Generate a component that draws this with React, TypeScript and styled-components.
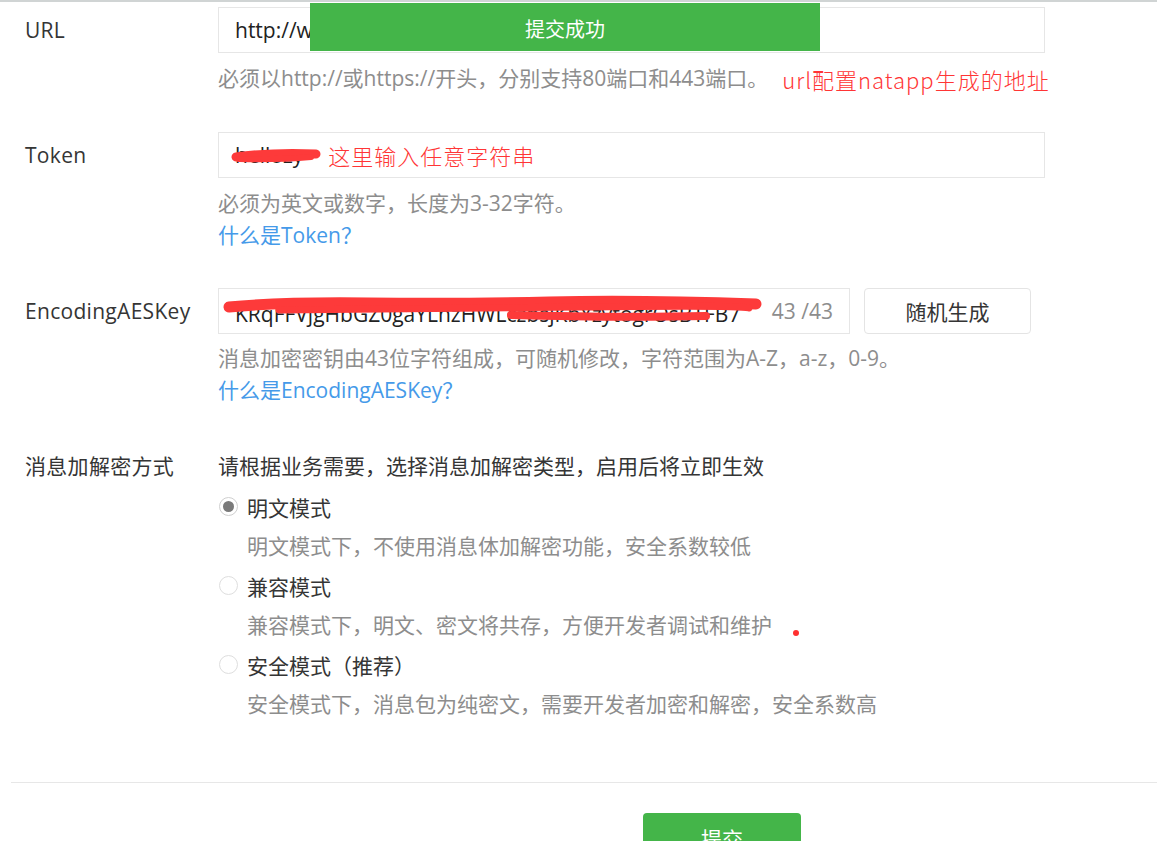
import React from "react";
import styled, { createGlobalStyle } from "styled-components";

const GlobalStyle = createGlobalStyle`
  html, body {
    margin: 0;
    padding: 0;
    background: #ffffff;
    overflow: hidden;
  }
  body {
    font-family: "Open Sans", "Noto Sans CJK SC", sans-serif;
    font-size: 21px;
    color: #353535;
  }
  * { box-sizing: border-box; }
`;

const Page = styled.div`
  position: relative;
  min-height: 841px;
  border-top: 2px solid #d0d4d4;
`;

const Toast = styled.div`
  position: absolute;
  top: 1px;
  left: 310px;
  width: 510px;
  height: 48px;
  background: #44b549;
  color: #ffffff;
  font-size: 20px;
  line-height: 52px;
  text-align: center;
  font-family: "Noto Sans CJK SC", sans-serif;
  z-index: 5;
`;

const Form = styled.div`
  display: flex;
  flex-direction: column;
  gap: 37px;
  padding: 5px 0 0 25px;
`;

const FieldRow = styled.div<{ $mt?: number }>`
  display: grid;
  grid-template-columns: 193px 827px;
  margin-top: ${(p) => p.$mt ?? 0}px;
`;

const Label = styled.div<{ $lh?: number }>`
  font-size: 21px;
  line-height: ${(p) => p.$lh ?? 46}px;
  color: #353535;
  white-space: nowrap;
  letter-spacing: 0.3px;
`;

const Control = styled.div`
  display: flex;
  flex-direction: column;
`;

const InputLine = styled.div`
  display: flex;
  gap: 14px;
`;

const TextBox = styled.div<{ $w?: number }>`
  position: relative;
  display: flex;
  align-items: center;
  width: ${(p) => (p.$w ? `${p.$w}px` : "100%")};
  height: 46px;
  padding: 0 16px;
  border: 1px solid #e6e6e6;
  background: #ffffff;
  overflow: hidden;
`;

const Value = styled.span`
  color: #222222;
  font-size: 21px;
  white-space: nowrap;
  flex: none;
`;

const ValueClip = styled.span`
  color: #222222;
  font-size: 21px;
  white-space: nowrap;
  flex: 1;
  overflow: hidden;
  padding-top: 6px;
`;

const Counter = styled.span`
  flex: none;
  margin-left: 6px;
  color: #8d8d8d;
  font-size: 21px;
  white-space: nowrap;
`;

const Note = styled.span<{ $ml?: number }>`
  margin-left: ${(p) => p.$ml ?? 0}px;
  color: #ff3535;
  font-family: "Noto Sans CJK SC", sans-serif;
  font-weight: 300;
  font-size: 22px;
  letter-spacing: 1px;
  white-space: nowrap;
  vertical-align: -3px;
`;

const Scribble = styled.svg`
  position: absolute;
  left: 0;
  top: 0;
  pointer-events: none;
`;

const Hint = styled.div<{ $mt?: number }>`
  margin-top: ${(p) => p.$mt ?? 9}px;
  color: #8d8d8d;
  font-size: 21px;
  line-height: 32px;
  white-space: nowrap;
`;

const HelpLink = styled.a`
  color: #459ae9;
  font-size: 21px;
  line-height: 32px;
  text-decoration: none;
  white-space: nowrap;
`;

const PlainButton = styled.button`
  width: 167px;
  height: 46px;
  border: 1px solid #e4e4e4;
  border-radius: 4px;
  background: #ffffff;
  color: #353535;
  font-family: "Noto Sans CJK SC", sans-serif;
  font-size: 21px;
  cursor: pointer;
`;

const Intro = styled.div`
  font-size: 21px;
  line-height: 42px;
  color: #353535;
  white-space: nowrap;
`;

const Option = styled.label`
  display: flex;
  align-items: center;
  gap: 9px;
  height: 39px;
  font-size: 21px;
  color: #353535;
  white-space: nowrap;
`;

const Radio = styled.span<{ $on?: boolean }>`
  position: relative;
  width: 19px;
  height: 19px;
  margin-left: 1px;
  border-radius: 50%;
  border: 1px solid ${(p) => (p.$on ? "#cfcfcf" : "#dedede")};
  background: #ffffff;
  flex: none;
  &::after {
    content: "";
    position: absolute;
    left: 3px;
    top: 3px;
    width: 11px;
    height: 11px;
    border-radius: 50%;
    background: ${(p) => (p.$on ? "#7a7a7a" : "transparent")};
  }
`;

const OptionDesc = styled.div`
  padding-left: 29px;
  height: 40px;
  line-height: 40px;
  font-size: 21px;
  color: #8d8d8d;
  white-space: nowrap;
`;

const Divider = styled.hr`
  margin: 58px 0 0 11px;
  border: none;
  border-top: 1px solid #e7e7e7;
  height: 0;
`;

const Footer = styled.div`
  padding: 30px 0 0 643px;
`;

const SubmitButton = styled.button`
  width: 158px;
  height: 50px;
  border: none;
  border-radius: 4px;
  background: #44b549;
  color: #ffffff;
  font-family: "Noto Sans CJK SC", sans-serif;
  font-size: 21px;
  cursor: pointer;
`;

const RedDot = styled.span`
  position: absolute;
  left: 793px;
  top: 628px;
  width: 6px;
  height: 6px;
  border-radius: 50%;
  background: #ff3030;
`;

const RED = "#fd3a3a";

const modes = [
  { name: "明文模式", desc: "明文模式下，不使用消息体加解密功能，安全系数较低", on: true },
  { name: "兼容模式", desc: "兼容模式下，明文、密文将共存，方便开发者调试和维护", on: false },
  { name: "安全模式（推荐）", desc: "安全模式下，消息包为纯密文，需要开发者加密和解密，安全系数高", on: false },
];

export default function App() {
  return (
    <Page>
      <GlobalStyle />
      <Toast>提交成功</Toast>
      <Form>
        <FieldRow>
          <Label>URL</Label>
          <Control>
            <TextBox>
              <Value>http://wxdemo.natappfree.cc/wx</Value>
            </TextBox>
            <Hint>
              必须以http://或https://开头，分别支持80端口和443端口。
              <Note $ml={14}>url配置natapp生成的地址</Note>
            </Hint>
          </Control>
        </FieldRow>

        <FieldRow>
          <Label>Token</Label>
          <Control>
            <TextBox>
              <Value>hellozy</Value>
              <Note $ml={25}>这里输入任意字符串</Note>
              <Scribble width="120" height="46" viewBox="0 0 120 46">
                <path d="M17 24 Q 55 19 97 21" stroke={RED} strokeWidth="9" strokeLinecap="round" fill="none" />
                <path d="M20 26 Q 60 27 92 24" stroke={RED} strokeWidth="6" strokeLinecap="round" fill="none" />
              </Scribble>
            </TextBox>
            <Hint>必须为英文或数字，长度为3-32字符。</Hint>
            <HelpLink href="#">什么是Token？</HelpLink>
          </Control>
        </FieldRow>

        <FieldRow>
          <Label>EncodingAESKey</Label>
          <Control>
            <InputLine>
              <TextBox $w={632}>
                <ValueClip>KRqFFVjgHbGZ0gaYLhzHWLczbsjKbYzytogrOsBTFB7</ValueClip>
                <Counter>43 /43</Counter>
                <Scribble width="560" height="46" viewBox="0 0 560 46">
                  <path d="M10 18 Q 60 13 150 14 T 330 13 T 537 15" stroke={RED} strokeWidth="11" strokeLinecap="round" fill="none" />
                  <path d="M60 21 Q 200 20 360 18 T 530 19" stroke={RED} strokeWidth="7" strokeLinecap="round" fill="none" />
                  <path d="M292 26 Q 400 29 487 27" stroke={RED} strokeWidth="8" strokeLinecap="round" fill="none" />
                </Scribble>
              </TextBox>
              <PlainButton>随机生成</PlainButton>
            </InputLine>
            <Hint $mt={8}>消息加密密钥由43位字符组成，可随机修改，字符范围为A-Z，a-z，0-9。</Hint>
            <HelpLink href="#">什么是EncodingAESKey？</HelpLink>
          </Control>
        </FieldRow>

        <FieldRow $mt={2}>
          <Label $lh={42}>消息加解密方式</Label>
          <Control>
            <Intro>请根据业务需要，选择消息加解密类型，启用后将立即生效</Intro>
            {modes.map((m) => (
              <React.Fragment key={m.name}>
                <Option>
                  <Radio $on={m.on} />
                  {m.name}
                </Option>
                <OptionDesc>{m.desc}</OptionDesc>
              </React.Fragment>
            ))}
          </Control>
        </FieldRow>
      </Form>
      <Divider />
      <Footer>
        <SubmitButton>提交</SubmitButton>
      </Footer>
      <RedDot />
    </Page>
  );
}
